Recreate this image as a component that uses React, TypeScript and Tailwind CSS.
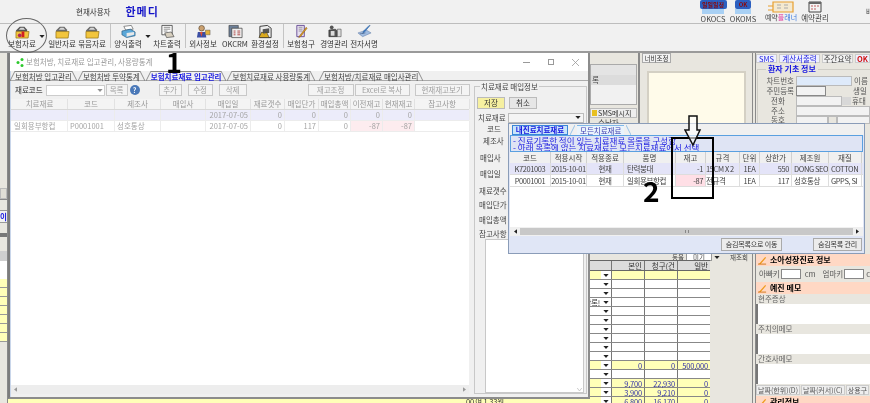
import React from 'react';

const Folder = () => (
  <svg viewBox="0 0 16 15" className="h-[14px] w-[15px]">
    <path d="M1 6 L5 2 L10 2 L13 5 L13 7 L1 7 Z" fill="#6b6b6b" />
    <path d="M4 5 L6 3 L9 3 L11 5 Z" fill="#d8d8d8" />
    <path d="M1 7 L15 7 L14 14 L1 14 Z" fill="#f2c53d" stroke="#8a6a10" strokeWidth="0.7" />
  </svg>
);

const FolderRed = () => (
  <svg viewBox="0 0 16 15" className="h-[14px] w-[15px]">
    <path d="M1 6 L5 2 L10 2 L13 5 L13 7 L1 7 Z" fill="#555" />
    <path d="M4 5 L6 3 L9 3 L11 5 Z" fill="#d8d8d8" />
    <path d="M1 7 L15 7 L14 14 L1 14 Z" fill="#f2c53d" stroke="#8a6a10" strokeWidth="0.7" />
    <path d="M7 7 L10 7 L10 13 L7 13 Z" fill="#d42020" />
    <circle cx="5" cy="11" r="2" fill="#b02a5a" />
  </svg>
);

const Printer = () => (
  <svg viewBox="0 0 16 15" className="h-[15px] w-[15px]">
    <path d="M3 2 L11 1 L13 5 L5 6 Z" fill="#fff" stroke="#555" strokeWidth="0.7" />
    <path d="M1 7 L10 5 L15 8 L15 12 L6 14 L1 11 Z" fill="#5aa7d8" stroke="#27597e" strokeWidth="0.7" />
    <path d="M6 9 L14 8 L14 11 L6 13 Z" fill="#e8e8e8" />
  </svg>
);

const Chart = () => (
  <svg viewBox="0 0 16 15" className="h-[15px] w-[15px]">
    <path d="M2 1 L13 1 L13 11 L2 11 Z" fill="#fff" stroke="#333" strokeWidth="0.8" />
    <path d="M4 3 L11 3 M4 5 L11 5 M4 7 L8 7" stroke="#555" strokeWidth="0.7" />
    <path d="M5 9 L12 8 L15 13 L7 14 Z" fill="#d8d0c0" stroke="#444" strokeWidth="0.7" />
  </svg>
);

const People = () => (
  <svg viewBox="0 0 16 15" className="h-[15px] w-[15px]">
    <circle cx="6" cy="4" r="3" fill="#c9a070" stroke="#4a3520" strokeWidth="0.6" />
    <path d="M1 14 L2 8 L10 8 L11 14 Z" fill="#3c4fa5" />
    <path d="M10 6 L15 6 L15 11 L10 11 Z" fill="#e3b23a" stroke="#555" strokeWidth="0.5" />
    <path d="M4 8 L7 8 L6 13 Z" fill="#e05030" />
  </svg>
);

const Crm = () => (
  <svg viewBox="0 0 16 15" className="h-[15px] w-[15px]">
    <path d="M1 1 L11 1 L11 13 L1 13 Z" fill="#6e8098" stroke="#333" strokeWidth="0.6" />
    <path d="M4 4 L15 4 L15 14 L4 14 Z" fill="#eee" stroke="#333" strokeWidth="0.7" />
    <path d="M6 7 L8 7 M10 7 L13 7 M6 9 L8 9 M10 9 L13 9 M6 11 L8 11 M10 11 L13 11" stroke="#a33" strokeWidth="0.9" />
  </svg>
);

const Settings = () => (
  <svg viewBox="0 0 16 15" className="h-[15px] w-[15px]">
    <path d="M2 2 L10 1 L14 4 L14 14 L2 14 Z" fill="#eee" stroke="#222" strokeWidth="0.9" />
    <path d="M5 5 L12 4 L12 9 L5 9 Z" fill="#555" />
    <path d="M1 14 L4 8 L7 10 L9 8 L12 14 Z" fill="#d9a91f" stroke="#222" strokeWidth="0.6" />
  </svg>
);

const Claim = () => (
  <svg viewBox="0 0 16 15" className="h-[15px] w-[15px]">
    <path d="M3 1 L11 1 L11 13 L3 13 Z" fill="#e6def0" stroke="#5b3f8c" strokeWidth="0.9" />
    <path d="M5 3 L9 3 M5 5 L9 5 M5 7 L9 7" stroke="#777" strokeWidth="0.7" />
    <path d="M14 4 L7 13 L5 14 L6 12 L13 3 Z" fill="#e0a020" stroke="#7a4b10" strokeWidth="0.5" />
  </svg>
);

const Manage = () => (
  <svg viewBox="0 0 16 15" className="h-[15px] w-[15px]">
    <circle cx="5" cy="3" r="2" fill="#555" />
    <path d="M2 6 L9 5 L11 7 L11 13 L2 13 Z" fill="#555" stroke="#222" strokeWidth="0.6" />
    <path d="M4 7 L8 7 L8 12 L4 12 Z" fill="#ddd" />
    <path d="M11 5 L15 5 L15 13 L11 13 Z" fill="#ddd" stroke="#444" strokeWidth="0.6" />
  </svg>
);

const Sign = () => (
  <svg viewBox="0 0 16 15" className="h-[15px] w-[15px]">
    <path d="M1 9 L10 6 L15 9 L6 13 Z" fill="#9fbbe0" stroke="#6c86ad" strokeWidth="0.6" />
    <path d="M14 1 L8 8 L6 10 L7 7 L13 1 Z" fill="#3c7fd0" stroke="#2a5a90" strokeWidth="0.5" />
    <path d="M3 10 L9 9" stroke="#506a90" strokeWidth="0.7" />
  </svg>
);

const Caret = ({ className = '' }: { className?: string }) => (
  <svg viewBox="0 0 7 4" className={`h-[3px] w-[6px] ${className}`}>
    <path d="M0 0 L7 0 L3.5 4 Z" fill="#222" />
  </svg>
);

const ToolItem = ({ icon, label, className = '' }: { icon: React.ReactNode; label: string; className?: string }) => (
  <div className={`flex w-[30px] shrink-0 flex-col items-center ${className}`}>
    <div className="flex h-[15px] items-center">{icon}</div>
    <span className="whitespace-nowrap text-[7.5px] leading-[10px] text-[#333]">{label}</span>
  </div>
);

const ToolSep = () => (
  <div className="flex h-[24px] w-[6px] shrink-0 justify-center">
    <div className="h-full w-px bg-[#c4c4c4]" />
  </div>
);

const Slant = ({ flip = false, color = '#777' }: { flip?: boolean; color?: string }) => (
  <svg viewBox="0 0 5 10" className="h-[10px] w-[5px] shrink-0">
    <path d={flip ? 'M0 0 L5 10' : 'M0 10 L5 0'} stroke={color} strokeWidth="0.8" fill="none" />
  </svg>
);

const WinTab = ({ label, active = false }: { label: string; active?: boolean }) => (
  <div className="flex h-[10px] items-stretch">
    <Slant />
    <span
      className={`whitespace-nowrap border-t border-[#888] text-[7.5px] leading-[10px] ${
        active ? 'font-bold text-[#1a1ae0]' : 'text-[#444]'
      }`}
    >
      {label}
    </span>
    <Slant flip />
  </div>
);

const FadedBtn = ({ label, className = '' }: { label: string; className?: string }) => (
  <div
    className={`flex h-[12px] shrink-0 items-center justify-center whitespace-nowrap border border-[#c8c8c8] bg-[#f4f4f4] text-[7.5px] leading-none text-[#a0a0a0] ${className}`}
  >
    {label}
  </div>
);

const gridCols = [
  { name: '치료재료', w: 'w-[56px]' },
  { name: '코드', w: 'w-[47px]' },
  { name: '제조사', w: 'w-[46px]' },
  { name: '매입사', w: 'w-[45px]' },
  { name: '매입일', w: 'w-[45px]' },
  { name: '재료갯수', w: 'w-[34px]' },
  { name: '매입단가', w: 'w-[34px]' },
  { name: '매입총액', w: 'w-[32px]' },
  { name: '이전재고', w: 'w-[32px]' },
  { name: '현재재고', w: 'w-[32px]' },
  { name: '참고사항', w: 'w-[55px]' },
];

const gridRows = [
  { bg: 'bg-[#ececfa]', cells: ['', '', '', '', '2017-07-05', '0', '0', '0', '0', '0', ''] },
  { bg: 'bg-white', cells: ['일회용부항컵', 'P0001001', '성호통상', '', '2017-07-05', '0', '117', '0', '-87', '-87', ''] },
];

const popupCols = [
  { name: '코드', w: 'w-[41px]', align: 'text-center' },
  { name: '적용시작', w: 'w-[36px]', align: 'text-center' },
  { name: '적용종료', w: 'w-[37px]', align: 'text-center' },
  { name: '품명', w: 'w-[52px]', align: 'text-left pl-[3px]' },
  { name: '재고', w: 'w-[30px]', align: 'text-right pr-[2px]' },
  { name: '규격', w: 'w-[34px]', align: 'text-left' },
  { name: '단위', w: 'w-[20px]', align: 'text-center' },
  { name: '상한가', w: 'w-[32px]', align: 'text-right pr-[2px]' },
  { name: '제조원', w: 'w-[37px]', align: 'text-left pl-[2px]' },
  { name: '재질', w: 'w-[33px]', align: 'text-left pl-[2px]' },
];

const popupRows = [
  { bg: 'bg-[#e4e4f8]', cells: ['K7201003', '2015-10-01', '현재', '탄력붕대', '-1', '15CM X 2', '1EA', '550', 'DONG SEO', 'COTTON'], pink: false },
  { bg: 'bg-white', cells: ['P0001001', '2015-10-01', '현재', '일회용부항컵', '-87', '전규격', '1EA', '117', '성호통상', 'GPPS, SI'], pink: true },
];

const billRows = [
  { y: true, left: '', a: '', b: '', c: '' },
  { y: false, left: '', a: '', b: '', c: '' },
  { y: false, left: '', a: '', b: '', c: '' },
  { y: false, left: '알록!', a: '', b: '', c: '' },
  { y: false, left: '', a: '', b: '', c: '' },
  { y: false, left: '', a: '', b: '', c: '' },
  { y: false, left: '', a: '', b: '', c: '' },
  { y: false, left: '', a: '', b: '', c: '' },
  { y: false, left: '', a: '', b: '', c: '' },
  { y: false, left: '', a: '', b: '', c: '' },
  { y: true, left: '', a: '0', b: '0', c: '500,000' },
  { y: false, left: '', a: '', b: '', c: '' },
  { y: true, left: '', a: '9,700', b: '22,930', c: '0' },
  { y: true, left: '', a: '3,900', b: '9,210', c: '0' },
  { y: true, left: '', a: '6,800', b: '16,170', c: '0' },
];

const FormLabel = ({ label, className = '' }: { label: string; className?: string }) => (
  <div className={`shrink-0 whitespace-nowrap text-[7.5px] leading-none text-[#555] ${className}`}>{label}</div>
);

const PeachHead = ({ label }: { label: string }) => (
  <div className="flex h-[12px] shrink-0 items-center gap-[3px] bg-[#ffd8c4] pl-[2px] text-[8px] font-bold leading-none text-black">
    <svg viewBox="0 0 10 10" className="h-[9px] w-[9px]">
      <path d="M1 9 L8 1 L9 2 L3 9 Z" fill="#f09a1a" />
      <path d="M0 9 L9 9" stroke="#d07010" strokeWidth="1" />
    </svg>
    {label}
  </div>
);

const MemoBlock = ({ label }: { label: string }) => (
  <div className="flex flex-col">
    <div className="flex h-[10px] items-center bg-[#e8e6df] pl-[2px] text-[7.5px] leading-none text-[#666]">{label}</div>
    <div className="h-[20px] border-l-2 border-[#777] bg-white" />
  </div>
);

export default function App() {
  return (
    <div className="relative flex h-[403px] w-[870px] flex-col overflow-hidden bg-[#e8e6df] blur-[0.35px] font-['Noto_Sans_CJK_KR','Noto_Sans',sans-serif]">
      {/* top info bar */}
      <div className="flex h-[24px] shrink-0 items-center border-b border-[#bdbdbd] bg-[#f1f1f1]">
        <span className="ml-[76px] whitespace-nowrap text-[7.5px] leading-none text-[#333]">현재사용자</span>
        <span className="ml-[15px] whitespace-nowrap text-[11px] font-bold leading-none tracking-[1px] text-[#1414c8]">한메디</span>
        <div className="ml-auto flex w-[172px] shrink-0 items-center">
          <div className="flex w-[30px] shrink-0 flex-col items-center">
            <div className="flex h-[9px] w-[27px] items-center justify-center whitespace-nowrap rounded-[2px] bg-[#2b5fc0] text-[6px] font-bold leading-none text-[#8c0a0a]">
              일일일정
            </div>
            <div className="h-[5px] w-[22px] bg-[#a8d0f4]" />
            <span className="text-[7.5px] leading-[9px] text-[#444]">OKOCS</span>
          </div>
          <div className="flex w-[30px] shrink-0 flex-col items-center">
            <div className="flex h-[9px] w-[16px] items-center justify-center rounded-[2px] bg-[#2b5fc0] text-[6px] font-bold leading-none text-[#8c0a0a]">
              OK
            </div>
            <div className="h-[5px] w-[16px] bg-[#a8d0f4]" />
            <span className="text-[7.5px] leading-[9px] text-[#444]">OKOMS</span>
          </div>
          <div className="ml-[8px] flex w-[30px] shrink-0 flex-col items-center">
            <svg viewBox="0 0 26 12" className="h-[12px] w-[26px]">
              <path d="M5 1 L25 1 L25 11 L5 11 Z" fill="#f4e9d0" stroke="#e8a030" strokeWidth="1.2" />
              <path d="M0 5 L5 5 M0 9 L5 9" stroke="#e8a030" strokeWidth="1.2" />
              <path d="M9 4 L13 4 M9 7 L13 7 M16 4 L20 4 M16 7 L20 7" stroke="#aaa" strokeWidth="1" />
            </svg>
            <span className="whitespace-nowrap text-[7px] leading-[9px] text-[#444]">
              예약<span className="text-[#e040a0]">플</span>
              <span className="text-[#3a7ae0]">래너</span>
            </span>
          </div>
          <div className="ml-[4px] flex w-[30px] shrink-0 flex-col items-center">
            <svg viewBox="0 0 14 12" className="h-[12px] w-[14px]">
              <path d="M1 1 L13 1 L13 11 L1 11 Z" fill="#f4f4f4" stroke="#444" strokeWidth="1" />
              <path d="M1 1 L13 1 L13 3 L1 3 Z" fill="#666" />
              <path d="M3 5 L5 5 M6 5 L8 5 M9 5 L11 5 M3 8 L5 8 M6 8 L8 8" stroke="#c06060" strokeWidth="1" />
            </svg>
            <span className="whitespace-nowrap text-[7.5px] leading-[9px] text-[#444]">예약관리</span>
          </div>
          <span className="ml-[36px] whitespace-nowrap text-[7.5px] leading-none text-[#444]">배</span>
        </div>
      </div>

      {/* main toolbar */}
      <div className="flex h-[27px] shrink-0 items-start bg-[#f1f1f1] pl-[7px]">
        <ToolItem icon={<FolderRed />} label="보험자료" />
        <div className="flex h-[24px] w-[10px] shrink-0 items-center justify-center"><Caret /></div>
        <ToolItem icon={<Folder />} label="일반자료" />
        <ToolItem icon={<Folder />} label="묶음자료" />
        <ToolSep />
        <ToolItem icon={<Printer />} label="양식출력" />
        <div className="flex h-[24px] w-[9px] shrink-0 items-center justify-center"><Caret /></div>
        <ToolItem icon={<Chart />} label="차트출력" />
        <ToolSep />
        <ToolItem icon={<People />} label="외사정보" />
        <ToolItem icon={<Crm />} label="OKCRM" className="ml-[2px]" />
        <ToolItem icon={<Settings />} label="환경설정" />
        <ToolSep />
        <ToolItem icon={<Claim />} label="보험청구" />
        <ToolItem icon={<Manage />} label="경영관리" className="ml-[3px]" />
        <ToolItem icon={<Sign />} label="전자서명" />
      </div>

      {/* background workspace */}
      <div className="flex min-h-0 flex-1 border-t-2 border-[#9a9a9a]">
        {/* left strip */}
        <div className="flex w-[8px] shrink-0 flex-col border-r border-[#888]">
          <div className="h-[135px] shrink-0" />
          <div className="h-[11px] shrink-0 border border-[#bbb] bg-[#e0ded6]" />
          <div className="h-[11px] shrink-0 border-t border-[#888]" />
          <div className="flex h-[13px] shrink-0 items-center overflow-hidden border-y border-[#999] bg-[#f2f2f2] text-[7.5px] font-bold leading-none text-[#1414e0]">
            이
          </div>
          <div className="h-[10px] shrink-0" />
          <div className="h-[4px] shrink-0 bg-[#777]" />
          <div className="h-[14px] shrink-0" />
          <div className="h-[10px] shrink-0 bg-[#cfcfcf]" />
          <div className="h-[8px] shrink-0 bg-white" />
          <div className="flex h-[10px] shrink-0 bg-white" />
          {[0, 1, 2, 3, 4, 5, 6].map((i) => (
            <div key={i} className="h-[9px] shrink-0 border-b border-[#999] bg-[#ffffb8]" />
          ))}
        </div>

        {/* centre */}
        <div className="flex w-[744px] shrink-0 flex-col">
          <div className="flex h-[201px] shrink-0">
            <div className="flex w-[632px] shrink-0 flex-col items-end border-r-2 border-[#8a8a8a] pr-[1px] pt-[11px]">
              <div className="flex h-[41px] w-[47px] flex-col border border-[#aaa]">
                <div className="h-[10px] bg-[#e4e4e4]" />
                <div className="flex h-[10px] items-center bg-[#dcdcdc] pl-[1px] text-[7.5px] leading-none text-[#444]">록</div>
                <div className="flex-1 bg-[#f1f1f1]" />
              </div>
              <div className="mt-[3px] flex h-[10px] w-[47px] items-center gap-[1px] overflow-hidden border border-[#bbb] bg-[#eeeeee] pl-[1px] text-[7px] leading-none text-[#333]">
                <span className="h-[6px] w-[5px] shrink-0 bg-[#e8c020]" />
                <span className="whitespace-nowrap">SMS메시지</span>
              </div>
              <div className="mt-[1px] w-[47px] pl-[8px] text-[7.5px] leading-none text-[#444]">수납자</div>
            </div>
            <div className="flex w-[110px] shrink-0 flex-col pl-[2px]">
              <div className="flex h-[10px] w-[29px] items-center justify-center whitespace-nowrap border border-[#aaa] bg-[#f2f2f2] text-[6.5px] leading-none text-[#333]">
                너비조정
              </div>
              <div className="ml-[5px] mt-[8px] w-[99px] flex-1 border-2 border-b-0 border-[#d4d0c4] bg-[#fffbea]" />
            </div>
          </div>

          <div className="flex min-h-0 flex-1 flex-col overflow-hidden">
            <div className="flex h-[6px] w-full shrink-0 items-center justify-end gap-[2px] pr-[4px] text-[6.5px] leading-none text-[#444]">
              <span className="whitespace-nowrap">동율</span>
              <span className="whitespace-nowrap border border-[#999] bg-white px-[6px]">미기</span>
              <Caret />
              <span className="ml-[8px] whitespace-nowrap">재조회</span>
            </div>
            <div className="flex h-[11px] w-[702px] shrink-0 border-y border-[#666] bg-[#dcdcdc] text-[7.5px] leading-[10px] text-[#333]">
              <div className="w-[603px] shrink-0" />
              <div className="w-[33px] shrink-0 border-l border-[#777] pr-[2px] text-right">본인</div>
              <div className="w-[33px] shrink-0 overflow-hidden whitespace-nowrap border-l border-[#777] pr-[2px] text-right">청구(건</div>
              <div className="w-[33px] shrink-0 border-l border-[#777] pr-[2px] text-right">일반</div>
            </div>
            {billRows.map((row, i) => (
              <div
                key={i}
                className={`flex h-[9px] w-[702px] shrink-0 border-b border-[#888] text-[7.5px] leading-[9px] tracking-[-0.2px] text-[#3232a8] ${
                  row.y ? 'bg-[#ffffb8]' : 'bg-white'
                }`}
              >
                <div className={`flex w-[593px] shrink-0 justify-end overflow-hidden ${i === 14 ? 'pr-[97px]' : 'pr-[1px]'}`}>
                  <span className="whitespace-nowrap text-[#333]">{i === 14 ? '00 여 1.33월' : row.left}</span>
                </div>
                <div className="flex w-[10px] shrink-0 items-center justify-center bg-white">
                  <Caret />
                </div>
                <div className="w-[33px] shrink-0 border-l border-[#777] pr-[2px] text-right">{row.a}</div>
                <div className="w-[33px] shrink-0 border-l border-[#777] pr-[2px] text-right">{row.b}</div>
                <div className="w-[33px] shrink-0 border-l border-[#777] pr-[2px] text-right">{row.c}</div>
              </div>
            ))}
          </div>
        </div>

        {/* right patient panel */}
        <div className="flex min-w-0 flex-1 flex-col border-l-4 border-double border-[#8a8a8a]">
          <div className="flex h-[201px] shrink-0 flex-col">
            <div className="flex h-[10px] gap-[2px] pt-[1px] text-[7.5px] leading-none">
              <div className="flex w-[21px] shrink-0 items-center justify-center border border-[#ccc] bg-[#eef0ff] text-[#2424e0]">SMS</div>
              <div className="flex w-[41px] shrink-0 items-center justify-center whitespace-nowrap border border-[#ccc] bg-[#eef0ff] text-[#2424e0]">계산서출력</div>
              <div className="flex w-[31px] shrink-0 items-center justify-center whitespace-nowrap border border-[#ccc] bg-[#f2f2f2] text-[#333]">주간요약</div>
              <div className="flex min-w-0 flex-1 items-center overflow-hidden border border-[#ccc] bg-[#eef0ff] pl-[1px] font-bold text-[#d01010]">OK</div>
            </div>
            <fieldset className="ml-[1px] mt-[2px] flex flex-1 flex-col border-l border-t border-[#cfcdc6] pl-[5px]">
              <legend className="ml-[3px] px-[2px] text-[8px] font-bold leading-none text-[#1414e0]">환자 기초 정보</legend>
              <div className="mt-[3px] flex h-[10px] items-center">
                <FormLabel label="차트번호" className="w-[31px] text-right" />
                <div className="ml-[2px] h-[10px] w-[56px] shrink-0 border border-[#bbb] bg-[#deeafa]" />
                <FormLabel label="이름" className="ml-[2px]" />
              </div>
              <div className="flex h-[10px] items-center">
                <FormLabel label="주민등록" className="w-[31px] text-right" />
                <div className="ml-[2px] h-[10px] w-[30px] shrink-0 border border-[#888] bg-[#f2f2f2]" />
                <FormLabel label="생일" className="ml-[27px]" />
              </div>
              <div className="flex h-[10px] items-center">
                <FormLabel label="전화" className="w-[31px] pl-[8px]" />
                <div className="ml-[2px] h-[10px] w-[46px] shrink-0 border border-[#bbb] bg-[#f2f2f2]" />
                <div className="h-[8px] w-[9px] shrink-0 bg-[#d8d8d8]" />
                <FormLabel label="휴대" className="ml-[1px]" />
              </div>
              <div className="flex h-[10px] items-center">
                <FormLabel label="주소" className="w-[31px] pl-[8px]" />
                <div className="ml-[2px] h-[10px] flex-1 border border-[#bbb] bg-[#f2f2f2]" />
              </div>
              <div className="flex h-[8px] items-center overflow-hidden">
                <FormLabel label="동호" className="w-[31px] pl-[8px]" />
                <div className="ml-[2px] h-[8px] w-[32px] shrink-0 border border-[#bbb] bg-[#f2f2f2]" />
                <div className="h-[8px] w-[9px] shrink-0 border border-[#bbb]" />
                <div className="h-[8px] flex-1 border border-[#bbb] bg-[#f2f2f2]" />
              </div>
            </fieldset>
          </div>
          <PeachHead label="소아성장진료 정보" />
          <div className="flex h-[16px] shrink-0 items-center gap-[1px] pl-[3px] text-[7.5px] leading-none text-[#555]">
            <span className="whitespace-nowrap">아빠키</span>
            <div className="h-[10px] w-[20px] shrink-0 border border-[#888] bg-white" />
            <span className="ml-[3px]">cm</span>
            <span className="ml-[6px] whitespace-nowrap">엄마키</span>
            <div className="h-[10px] w-[20px] shrink-0 border border-[#888] bg-white" />
            <span className="ml-[1px]">cm</span>
          </div>
          <PeachHead label="예진 메모" />
          <MemoBlock label="현주증상" />
          <MemoBlock label="주치의메모" />
          <MemoBlock label="간호사메모" />
          <div className="flex h-[11px] shrink-0 gap-[1px] overflow-hidden pt-[1px] text-[7px] leading-none text-[#555]">
            <div className="flex shrink-0 items-center whitespace-nowrap border border-[#ccc] bg-[#eee] px-[1px]">날짜(한위)(D)</div>
            <div className="flex shrink-0 items-center whitespace-nowrap border border-[#ccc] bg-[#eee] px-[1px]">날짜(커서)(C)</div>
            <div className="flex shrink-0 items-center whitespace-nowrap border border-[#ccc] bg-[#eee] px-[1px]">상용구</div>
          </div>
          <div className="mt-[1px]"><PeachHead label="관리정보" /></div>
        </div>
      </div>

      {/* inventory window */}
      <div className="absolute left-[8px] top-[53px] flex h-[346px] w-[582px] flex-col border-2 border-t-0 border-[#8c8c8c] border-l-[#7c7c7c] bg-[#f0f0f0] shadow-[inset_1px_0_0_#c9d6ea]">
        <div className="flex h-[18px] shrink-0 items-center bg-white pl-[6px]">
          <svg viewBox="0 0 8 9" className="h-[9px] w-[8px]">
            <circle cx="2" cy="4.5" r="1.5" fill="#2cc82c" />
            <circle cx="6" cy="1.5" r="1.5" fill="#2cc82c" />
            <circle cx="6" cy="7.5" r="1.5" fill="#2cc82c" />
          </svg>
          <span className="ml-[2px] whitespace-nowrap text-[7.5px] leading-none text-[#9a9a9a]">보험처방, 치료재료 입고관리, 사용량통계</span>
          <div className="ml-auto flex items-center gap-[18px] pr-[9px]">
            <div className="h-px w-[7px] bg-[#999]" />
            <div className="h-[6px] w-[6px] border border-[#999]" />
            <svg viewBox="0 0 8 8" className="h-[7px] w-[7px]">
              <path d="M0 0 L8 8 M8 0 L0 8" stroke="#999" strokeWidth="0.9" />
            </svg>
          </div>
        </div>

        <div className="flex h-[10px] shrink-0 gap-[1px] border-b border-[#aaa]">
          <WinTab label="보험처방 입고관리" />
          <WinTab label="보험처방 투약통계" />
          <WinTab label="보험치료재료 입고관리" active />
          <WinTab label="보험치료재료 사용량통계" />
          <div className="ml-[3px]"><WinTab label="보험처방/치료재료 매입사관리" /></div>
        </div>

        <div className="flex min-h-0 flex-1">
          <div className="flex w-[459px] shrink-0 flex-col pl-[1px]">
            <div className="flex h-[18px] shrink-0 items-center">
              <span className="ml-[4px] whitespace-nowrap text-[7.5px] font-medium leading-none text-[#555]">재료코드</span>
              <div className="ml-[3px] flex h-[11px] w-[59px] shrink-0 items-center justify-end border border-[#ccc] bg-white pr-[1px]"><Caret className="opacity-50" /></div>
              <FadedBtn label="목록" className="ml-[1px] w-[22px]" />
              <div className="ml-[2px] flex h-[10px] w-[10px] shrink-0 items-center justify-center rounded-full bg-[#4a78b8] text-[7px] font-bold leading-none text-white">?</div>
              <FadedBtn label="추가" className="ml-[19px] w-[23px]" />
              <FadedBtn label="수정" className="ml-[6px] w-[25px]" />
              <FadedBtn label="삭제" className="ml-[6px] w-[28px]" />
              <FadedBtn label="재고조정" className="ml-[61px] w-[46px]" />
              <FadedBtn label="Excel로 복사" className="ml-[1px] w-[55px]" />
              <FadedBtn label="현재재고보기" className="ml-[5px] w-[55px]" />
            </div>
            <div className="flex h-[11px] shrink-0 border-b border-[#d8d8d8] bg-[#f4f4f4] pl-[1px]">
              {gridCols.map((c) => (
                <div key={c.name} className={`${c.w} shrink-0 whitespace-nowrap border-r border-[#e2e2e2] text-center text-[7.5px] leading-[10px] text-[#999]`}>
                  {c.name}
                </div>
              ))}
            </div>
            <div className="flex min-h-0 flex-1 flex-col bg-white">
              {gridRows.map((row, i) => (
                <div key={i} className={`flex h-[11px] shrink-0 border-b border-[#ececec] pl-[1px] ${row.bg}`}>
                  {row.cells.map((cell, j) => (
                    <div
                      key={j}
                      className={`${gridCols[j].w} shrink-0 overflow-hidden whitespace-nowrap border-r border-[#ececec] px-[2px] text-[7.5px] leading-[10px] text-[#a4a4a4] ${
                        j >= 4 && j <= 9 ? 'text-right' : 'text-left'
                      } ${i === 1 && (j === 8 || j === 9) ? 'bg-[#fdecef]' : ''}`}
                    >
                      {cell}
                    </div>
                  ))}
                </div>
              ))}
            </div>
            <div className="flex h-[9px] shrink-0 items-center justify-between bg-[#ededed] px-[3px]">
              <svg viewBox="0 0 4 6" className="h-[5px] w-[3px]"><path d="M4 0 L0 3 L4 6 Z" fill="#999" /></svg>
              <svg viewBox="0 0 4 6" className="h-[5px] w-[3px]"><path d="M0 0 L4 3 L0 6 Z" fill="#999" /></svg>
            </div>
            <div className="h-[3px] shrink-0" />
          </div>

          <fieldset className="mb-[3px] ml-[5px] mt-[2px] flex w-[113px] shrink-0 flex-col border border-[#c8c8c8] px-[2px] text-[7.5px] leading-none text-[#444]">
            <legend className="ml-[3px] whitespace-nowrap px-[1px] text-[7.5px] leading-none text-[#444]">치료재료 매입정보</legend>
            <div className="mt-[6px] flex gap-[4px]">
              <div className="flex h-[12px] w-[28px] items-center justify-center border border-[#bbb] bg-[#f6f0a0] text-[#333]">저장</div>
              <div className="flex h-[12px] w-[28px] items-center justify-center border border-[#bbb] bg-[#e6e6e6] text-[#333]">취소</div>
            </div>
            <div className="mt-[4px] flex h-[10px] items-center">
              <span className="w-[31px] shrink-0 whitespace-nowrap pl-[1px]">치료재료</span>
              <div className="flex h-[10px] flex-1 items-center justify-end border border-[#bbb] bg-[#f4f4f4] pr-[2px]"><Caret /></div>
            </div>
            <div className="mt-[2px] pl-[10px]">코드</div>
            <div className="mt-[5px] pl-[6px]">제조사</div>
            <div className="mt-[9px] pl-[3px]">매입사</div>
            <div className="mt-[9px] pl-[3px]">매입일</div>
            <div className="mt-[9px] pl-[2px]">재료갯수</div>
            <div className="mt-[7px] pl-[2px]">매입단가</div>
            <div className="mt-[7px] pl-[2px]">매입총액</div>
            <div className="mt-[7px] pl-[2px]">참고사항</div>
            <div className="ml-[8px] mt-[1px] flex min-h-0 flex-1 items-end justify-end border border-[#c8c8c8] bg-white p-[1px]">
              <svg viewBox="0 0 6 4" className="h-[3px] w-[5px]"><path d="M0 0 L3 4 L6 0" stroke="#bbb" fill="none" /></svg>
            </div>
          </fieldset>
        </div>
      </div>

      {/* material picker popup */}
      <div className="absolute left-[508px] top-[123px] flex h-[131px] w-[357px] flex-col border border-[#8a9cb8] bg-[#e0e6f6]">
        <div className="flex h-[11px] shrink-0 items-end gap-[2px] bg-[#f0f0f0] pl-[3px]">
          <div className="flex h-[10px] w-[56px] items-center justify-center whitespace-nowrap border border-[#3a86d8] bg-[#c8e4fa] text-[7.5px] font-bold leading-none text-[#1414e0]">내진료치료재료</div>
          <Slant color="#7fb8e8" />
          <div className="flex h-[10px] items-center whitespace-nowrap border-t border-[#7fb8e8] bg-[#eaf4fc] px-[3px] text-[7.5px] leading-none text-[#3a3ab0]">모든치료재료</div>
          <Slant flip color="#7fb8e8" />
        </div>
        <div className="mx-[1px] flex h-[17px] shrink-0 flex-col justify-center overflow-hidden border border-[#5aa0e0] bg-[#dfe4f4] pl-[2px] text-[8.5px] leading-[7px] text-[#1e1ee0]">
          <div className="whitespace-nowrap">- 진료기록한 적이 있는 치료재료 목록을 구성함</div>
          <div className="whitespace-nowrap">- 아래 목록에 없는 치료재료는 모든치료재료에서 선택</div>
        </div>
        <div className="mx-[1px] flex h-[11px] shrink-0 bg-[#f0f0f0]">
          {popupCols.map((c) => (
            <div key={c.name} className={`${c.w} shrink-0 whitespace-nowrap border-r border-[#d0d0d0] text-center text-[7.5px] leading-[11px] text-[#444]`}>
              {c.name}
            </div>
          ))}
        </div>
        <div className="mx-[1px] flex min-h-0 flex-1 flex-col bg-white">
          {popupRows.map((row, i) => (
            <div key={i} className={`flex h-[12px] shrink-0 border-b border-[#dddddd] ${row.bg}`}>
              {row.cells.map((cell, j) => (
                <div
                  key={j}
                  className={`${popupCols[j].w} ${popupCols[j].align} shrink-0 overflow-hidden whitespace-nowrap border-r border-[#dddddd] text-[7.5px] leading-[12px] tracking-[-0.4px] text-[#444] ${
                    j === 4 && row.pink ? 'bg-[#ffdfe6]' : ''
                  }`}
                >
                  {cell}
                </div>
              ))}
            </div>
          ))}
        </div>
        <div className="mx-[1px] flex h-[9px] shrink-0 items-center bg-[#f0f0f0] px-[4px]">
          <svg viewBox="0 0 4 6" className="h-[5px] w-[3px]"><path d="M4 0 L0 3 L4 6 Z" fill="#222" /></svg>
          <div className="mx-[3px] flex h-[7px] flex-1 items-center justify-center bg-[#c8c8c8]">
            <div className="h-[3px] w-[4px] border-x border-[#888]" />
          </div>
          <svg viewBox="0 0 4 6" className="h-[5px] w-[3px]"><path d="M0 0 L4 3 L0 6 Z" fill="#222" /></svg>
        </div>
        <div className="flex h-[17px] shrink-0 items-center justify-end pr-[2px]">
          <div className="flex h-[13px] w-[61px] items-center justify-center whitespace-nowrap border border-[#aaa] bg-[#ececec] text-[7px] leading-none tracking-[-0.2px] text-[#333]">숨김목록으로 이동</div>
          <div className="ml-[31px] flex h-[13px] w-[49px] items-center justify-center whitespace-nowrap border border-[#aaa] bg-[#ececec] text-[7px] leading-none tracking-[-0.2px] text-[#333]">숨김목록 관리</div>
        </div>
      </div>

      {/* annotations */}
      <div className="absolute left-[6px] top-[18px] h-[35px] w-[41px] rounded-[50%] border border-[#666]" />
      <div className="absolute left-[166px] top-[46px] text-[27px] font-bold leading-[32px] text-black">1</div>
      <div className="absolute left-[643px] top-[174px] text-[28px] font-bold leading-[32px] text-black">2</div>
      <div className="absolute left-[671px] top-[137px] h-[62px] w-[43px] border-2 border-black" />
      <svg viewBox="0 0 18 32" className="absolute left-[684px] top-[115px] h-[32px] w-[18px]">
        <path d="M5 1 L13 1 L13 15 L16 15 L9 30 L1 15 L5 15 Z" fill="#fff" fillOpacity="0.6" stroke="#111" strokeWidth="1.5" />
      </svg>
    </div>
  );
}
